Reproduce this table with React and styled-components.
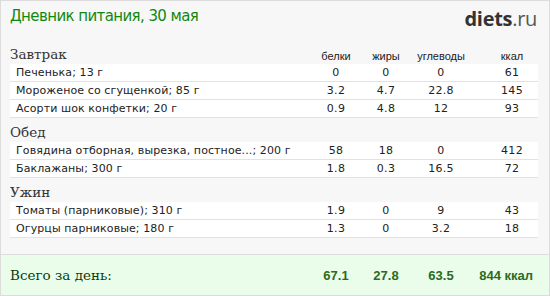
import React from "react";
import styled, { createGlobalStyle } from "styled-components";

const Global = createGlobalStyle`
  html, body { margin: 0; padding: 0; background: #fff; }
  * { box-sizing: border-box; }
`;

const Card = styled.div`
  width: 550px;
  height: 296px;
  border: 1px solid #dcdcdc;
  background: #f7f7f7;
  display: flex;
  flex-direction: column;
  overflow: hidden;
`;

const Top = styled.div`
  height: 39px;
  display: flex;
  justify-content: space-between;
  align-items: flex-start;
  padding: 5px 12px 0 9px;
`;

const Title = styled.div`
  font-family: "DejaVu Sans", Verdana, sans-serif;
  font-size: 15px;
  letter-spacing: -0.6px;
  color: #118811;
  line-height: 20px;
`;

const Logo = styled.div`
  font-family: "Open Sans", "Liberation Sans", sans-serif;
  font-size: 20px;
  line-height: 22px;
  padding-top: 2px;
  color: #333;
  letter-spacing: -0.3px;
  b { font-weight: 700; color: #333; }
  span { font-weight: 400; color: #555; }
`;

const Body = styled.div`
  padding: 0 11px 0 9px;
  display: flex;
  flex-direction: column;
`;

const Grid = styled.div`
  display: grid;
  grid-template-columns: 1fr 50px 50px 60px 67px;
  align-items: center;
`;

const HeadRow = styled(Grid)`
  height: 24px;
`;

const SectionName = styled.div`
  font-family: "DejaVu Serif", "Liberation Serif", serif;
  font-size: 13.5px;
  color: #333;
  align-self: end;
  line-height: 20px;
`;

const ColHead = styled.div`
  font-family: "Liberation Sans", Arial, sans-serif;
  font-size: 11px;
  color: #222;
  text-align: center;
  align-self: end;
  line-height: 16px;
  padding-left: ${(p) => (p.$kcal ? 15 : 0)}px;
`;

const Row = styled(Grid)`
  height: 18px;
  background: #fff;
  border-bottom: 1px solid #e2e2e2;
  font-family: "DejaVu Sans", Verdana, sans-serif;
  font-size: 11px;
  color: #222;
`;

const Name = styled.div`
  padding-left: 6px;
  white-space: nowrap;
  letter-spacing: 0.1px;
`;

const Num = styled.div`
  text-align: center;
  letter-spacing: 0.3px;
  padding-left: ${(p) => (p.$kcal ? 15 : 0)}px;
`;

const Spacer = styled.div`
  flex: 1;
`;

const Total = styled(Grid)`
  height: 41px;
  background: #eafdea;
  border-top: 1px solid #dcdcdc;
  padding: 0 11px 0 9px;
`;

const TotalLabel = styled.div`
  font-family: "DejaVu Serif", "Liberation Serif", serif;
  font-size: 13.5px;
  color: #0b3d0b;
`;

const TotalNum = styled.div`
  font-family: "Liberation Sans", Arial, sans-serif;
  font-weight: 700;
  font-size: 13px;
  color: #2c6a1e;
  text-align: ${(p) => (p.$kcal ? "right" : "center")};
  padding-right: ${(p) => (p.$kcal ? 5 : 0)}px;
`;

const sections = [
  {
    name: "Завтрак",
    items: [
      ["Печенька; 13 г", "0", "0", "0", "61"],
      ["Мороженое со сгущенкой; 85 г", "3.2", "4.7", "22.8", "145"],
      ["Асорти шок конфетки; 20 г", "0.9", "4.8", "12", "93"],
    ],
  },
  {
    name: "Обед",
    items: [
      ["Говядина отборная, вырезка, постное...; 200 г", "58", "18", "0", "412"],
      ["Баклажаны; 300 г", "1.8", "0.3", "16.5", "72"],
    ],
  },
  {
    name: "Ужин",
    items: [
      ["Томаты (парниковые); 310 г", "1.9", "0", "9", "43"],
      ["Огурцы парниковые; 180 г", "1.3", "0", "3.2", "18"],
    ],
  },
];

export default function App() {
  return (
    <>
      <Global />
      <Card>
        <Top>
          <Title>Дневник питания, 30 мая</Title>
          <Logo>
            <b>diets</b>
            <span>.ru</span>
          </Logo>
        </Top>
        <Body>
          {sections.map((s, si) => (
            <React.Fragment key={s.name}>
              <HeadRow>
                <SectionName>{s.name}</SectionName>
                {si === 0 && (
                  <>
                    <ColHead>белки</ColHead>
                    <ColHead>жиры</ColHead>
                    <ColHead>углеводы</ColHead>
                    <ColHead $kcal>ккал</ColHead>
                  </>
                )}
              </HeadRow>
              {s.items.map((it) => (
                <Row key={it[0]}>
                  <Name>{it[0]}</Name>
                  <Num>{it[1]}</Num>
                  <Num>{it[2]}</Num>
                  <Num>{it[3]}</Num>
                  <Num $kcal>{it[4]}</Num>
                </Row>
              ))}
            </React.Fragment>
          ))}
        </Body>
        <Spacer />
        <Total>
          <TotalLabel>Всего за день:</TotalLabel>
          <TotalNum>67.1</TotalNum>
          <TotalNum>27.8</TotalNum>
          <TotalNum>63.5</TotalNum>
          <TotalNum $kcal>844 ккал</TotalNum>
        </Total>
      </Card>
    </>
  );
}
